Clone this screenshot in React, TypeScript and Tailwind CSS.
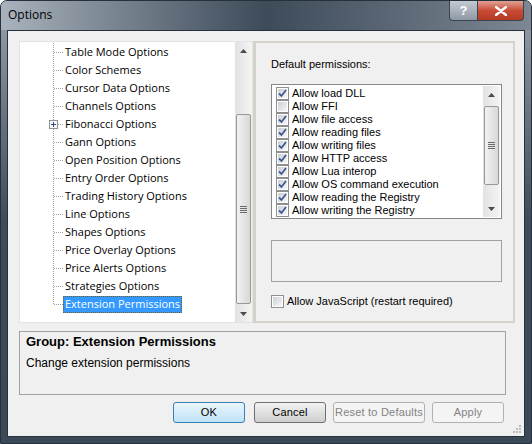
import React from 'react';

const treeItems = [
  'Table Mode Options',
  'Color Schemes',
  'Cursor Data Options',
  'Channels Options',
  'Fibonacci Options',
  'Gann Options',
  'Open Position Options',
  'Entry Order Options',
  'Trading History Options',
  'Line Options',
  'Shapes Options',
  'Price Overlay Options',
  'Price Alerts Options',
  'Strategies Options',
  'Extension Permissions',
];

const permissions = [
  { label: 'Allow load DLL', on: true },
  { label: 'Allow FFI', on: false },
  { label: 'Allow file access', on: true },
  { label: 'Allow reading files', on: true },
  { label: 'Allow writing files', on: true },
  { label: 'Allow HTTP access', on: true },
  { label: 'Allow Lua interop', on: true },
  { label: 'Allow OS command execution', on: true },
  { label: 'Allow reading the Registry', on: true },
  { label: 'Allow writing the Registry', on: true },
];

function Connector({ last, plus }: { last?: boolean; plus?: boolean }) {
  return (
    <svg width="43" height="18" className="shrink-0">
      <line x1="33.5" y1="0" x2="33.5" y2={last ? 9 : 18} stroke="#a0a0a0" strokeDasharray="1 1" />
      <line x1={plus ? 38 : 34} y1="9.5" x2="43" y2="9.5" stroke="#a0a0a0" strokeDasharray="1 1" />
      {plus && (
        <g>
          <rect x="29.5" y="5.5" width="8" height="8" fill="#f6f6f6" stroke="#919191" />
          <line x1="31" y1="9.5" x2="36" y2="9.5" stroke="#2f4f8a" />
          <line x1="33.5" y1="7" x2="33.5" y2="12" stroke="#2f4f8a" />
        </g>
      )}
    </svg>
  );
}

function Arrow({ up }: { up?: boolean }) {
  return (
    <div className="flex h-[17px] w-[17px] items-center justify-center">
      <svg width="7" height="4">
        <path d={up ? 'M0 4 L3.5 0 L7 4 Z' : 'M0 0 L3.5 4 L7 0 Z'} fill="#4a4a4a" />
      </svg>
    </div>
  );
}

function ScrollBar({ before, thumb }: { before: number; thumb: number }) {
  return (
    <div className="flex h-full w-[17px] shrink-0 flex-col bg-gradient-to-r from-[#e2e2e2] to-[#f4f4f4]">
      <Arrow up />
      <div style={{ height: before }} />
      <div
        className="mx-[1px] flex items-center justify-center rounded-[2px] border border-[#979797] bg-gradient-to-r from-[#f2f2f2] to-[#d8d8d8]"
        style={{ height: thumb }}
      >
        <div className="flex flex-col gap-[1px]">
          <div className="h-[1px] w-[7px] bg-[#6b6b6b]" />
          <div className="h-[1px] w-[7px] bg-[#6b6b6b]" />
          <div className="h-[1px] w-[7px] bg-[#6b6b6b]" />
          <div className="h-[1px] w-[7px] bg-[#6b6b6b]" />
        </div>
      </div>
      <div className="flex-1" />
      <Arrow />
    </div>
  );
}

function Check({ on, disabled }: { on?: boolean; disabled?: boolean }) {
  return (
    <svg width="13" height="13" className="shrink-0">
      <defs>
        <linearGradient id={disabled ? 'cbd' : 'cb'} x1="0" y1="0" x2="1" y2="1">
          <stop offset="0" stopColor="#cbcfd5" />
          <stop offset="1" stopColor="#f7f7f7" />
        </linearGradient>
      </defs>
      <rect x="0.5" y="0.5" width="12" height="12" fill="#fff" stroke="#8f8f8f" />
      <rect x="2" y="2" width="9" height="9" fill={`url(#${disabled ? 'cbd' : 'cb'})`} />
      {on && <path d="M3 6.5 L5.5 9 L10 3" fill="none" stroke="#3e5b93" strokeWidth="1.8" />}
    </svg>
  );
}

function Button({ label, primary, disabled, w }: { label: string; primary?: boolean; disabled?: boolean; w: string }) {
  const style = primary
    ? 'border-[#3c7fb1] bg-gradient-to-b from-[#ebf6fd] to-[#bfe2f8] text-black'
    : disabled
      ? 'border-[#adb2b5] bg-[#f4f4f4] text-[#838383]'
      : 'border-[#707070] bg-gradient-to-b from-[#f2f2f2] to-[#cfcfcf] text-black';
  return (
    <div
      className={`flex h-[21px] ${w} items-center justify-center whitespace-nowrap rounded-[3px] border text-[11px] tracking-[0.2px] ${style}`}
    >
      {label}
    </div>
  );
}

export default function App() {
  return (
    <div className="flex h-[444px] w-[532px] flex-col overflow-hidden rounded-t-[7px] border border-[#27313c] bg-gradient-to-b from-[#9aa3ad] via-[#3d4b5a] to-[#3a4857] font-['Liberation_Sans',Arial,sans-serif]">
      {/* title bar */}
      <div className="flex h-[29px] shrink-0 items-start bg-gradient-to-r from-[#a9b3bd] via-[#3e4b59] to-[#7c8793]">
        <div className="pl-[7px] pt-[5px] font-['Open_Sans',sans-serif] text-[12px] text-black">Options</div>
        <div className="flex-1" />
        <div className="mr-[7px] flex h-[20px]">
          <div className="flex w-[29px] items-center justify-center rounded-bl-[4px] border border-t-0 border-[#3b4652] bg-gradient-to-b from-[#c4cad1] to-[#8f99a4] text-[13px] font-bold text-white">
            ?
          </div>
          <div className="flex w-[46px] items-center justify-center rounded-br-[4px] border border-l-0 border-t-0 border-[#3b4652] bg-gradient-to-b from-[#e0a195] via-[#c74b35] to-[#b53a24]">
            <svg width="12" height="10">
              <path d="M1 1 L11 9 M11 1 L1 9" stroke="#fff" strokeWidth="2.4" strokeLinecap="round" />
            </svg>
          </div>
        </div>
      </div>

      {/* client */}
      <div className="relative mx-[6px] mb-[6px] flex flex-1 flex-col border border-[#27313c] bg-[#f0f0f0] pl-[11px] pt-[10px]">
        <div className="flex h-[282px] pr-[9px]">
          {/* tree */}
          <div className="flex w-[234px] border border-[#e3e3e3] bg-white">
            <div className="flex flex-1 flex-col pt-[1px] font-['Open_Sans',sans-serif] text-[11px] text-black">
              {treeItems.map((t, i) => {
                const last = i === treeItems.length - 1;
                return (
                  <div key={t} className="flex h-[18px] items-center">
                    <Connector last={last} plus={t === 'Fibonacci Options'} />
                    {last ? (
                      <span className="flex h-[17px] items-center border border-dotted border-[#7a5a20] bg-[#3399ff] px-[1px] text-white">
                        {t}
                      </span>
                    ) : (
                      <span className="px-[2px]">{t}</span>
                    )}
                  </div>
                );
              })}
            </div>
            <ScrollBar before={55} thumb={190} />
          </div>

          {/* right panel */}
          <div className="flex flex-1 flex-col border-2 border-l-[3px] border-[#d6d2cb] bg-[#f0f0f0] pl-[15px] pr-[11px] pt-[14px] text-[11px] text-black">
            <div className="leading-[14px]">Default permissions:</div>
            <div className="mt-[13px] flex h-[135px] border border-[#828790] bg-white p-[1px]">
              <div className="flex flex-1 flex-col pl-[3px] pt-[1px]">
                {permissions.map((p) => (
                  <div key={p.label} className="flex h-[13px] items-center gap-[3px] leading-[13px]">
                    <Check on={p.on} />
                    <span>{p.label}</span>
                  </div>
                ))}
              </div>
              <ScrollBar before={3} thumb={79} />
            </div>
            <div className="mt-[21px] h-[42px] border border-[#a0a0a0]" />
            <div className="mt-[11px] flex items-center gap-[3px]">
              <Check disabled />
              <span className="text-[11px]">Allow JavaScript (restart required)</span>
            </div>
          </div>
        </div>

        {/* group box */}
        <div className="mr-[18px] mt-[8px] flex h-[64px] flex-col border border-[#a0a0a0] pl-[6px] pt-[2px] text-black">
          <div className="text-[13px] font-bold leading-[16px]">Group: Extension Permissions</div>
          <div className="mt-[5px] text-[12px] leading-[16px]">Change extension permissions</div>
        </div>

        {/* buttons */}
        <div className="mr-[20px] mt-[7px] flex justify-end gap-[7px]">
          <div className="mr-[2px] flex">
            <Button label="OK" primary w="w-[72px]" />
          </div>
          <Button label="Cancel" w="w-[72px]" />
          <Button label="Reset to Defaults" disabled w="w-[92px]" />
          <Button label="Apply" disabled w="w-[72px]" />
        </div>

        <svg width="10" height="10" className="absolute bottom-[2px] right-[2px]">
          {[
            [7, 1],
            [7, 4],
            [4, 4],
            [7, 7],
            [4, 7],
            [1, 7],
          ].map(([x, y]) => (
            <rect key={`${x}-${y}`} x={x} y={y} width="2" height="2" fill="#b8bcc0" />
          ))}
        </svg>
      </div>
    </div>
  );
}
